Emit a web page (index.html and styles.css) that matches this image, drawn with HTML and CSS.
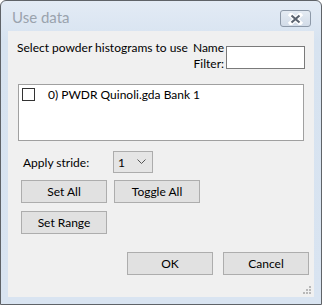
FILE: index.html
```html
<html>

<head>
    <meta charset="utf-8">
    <title>Use data</title>
    <link rel="stylesheet" href="styles.css">
</head>

<body>
    <div class="window">
        <div class="titleBar">
            <div class="titleText">Use data</div>
            <div class="closeBtn">
                <svg width="17" height="12" viewBox="0 0 17 12">
                    <path d="M4 2 L13 10 M13 2 L4 10" stroke="#ffffff" stroke-width="4.5" stroke-linecap="square" fill="none"/>
                    <path d="M4.5 2.5 L12.5 9.5 M12.5 2.5 L4.5 9.5" stroke="#5b6470" stroke-width="2.2" fill="none"/>
                </svg>
            </div>
        </div>

        <div class="client">
            <div class="headRow">
                <div class="headText">Select powder histograms to use</div>
                <div class="filterLabel">Name<br/>Filter:</div>
                <input type="text" class="filterBox">
            </div>

            <div class="listBox">
                <div class="listRow">
                    <span class="checkBox"></span>
                    <span class="listText">0) PWDR Quinoli.gda Bank 1</span>
                </div>
            </div>

            <div class="strideRow">
                <div class="strideLabel">Apply stride:</div>
                <div class="combo">
                    <span>1</span>
                    <svg width="9" height="6" viewBox="0 0 9 6">
                        <path d="M0.5 0.5 L4.5 4.5 L8.5 0.5" stroke="#555555" stroke-width="1" fill="none"/>
                    </svg>
                </div>
            </div>

            <div class="btnRow">
                <div class="btn">Set All</div>
                <div class="btn">Toggle All</div>
            </div>
            <div class="btnRow rangeRow">
                <div class="btn">Set Range</div>
            </div>

            <div class="okRow">
                <div class="btn">OK</div>
                <div class="btn">Cancel</div>
            </div>

            <svg class="grip" width="9" height="9" viewBox="0 0 9 9">
                <rect x="6" y="0" width="2" height="2" fill="#b8b8b8"/>
                <rect x="3" y="3" width="2" height="2" fill="#b8b8b8"/>
                <rect x="6" y="3" width="2" height="2" fill="#b8b8b8"/>
                <rect x="0" y="6" width="2" height="2" fill="#b8b8b8"/>
                <rect x="3" y="6" width="2" height="2" fill="#b8b8b8"/>
                <rect x="6" y="6" width="2" height="2" fill="#b8b8b8"/>
            </svg>
        </div>
    </div>
</body>

</html>
```

FILE: styles.css
```css
html {
    padding: 0;
    margin: 0;
}

body {
    margin: 0;
    background-color: #ffffff;
    font-family: Lato, "Noto Sans", sans-serif;
    font-size: 12px;
    color: #000000;
}

.window {
    width: 320px;
    height: 303px;
    border: 1px solid #5f6368;
    border-radius: 6px 6px 0 0;
    background: linear-gradient(#e3ebf5, #d7e3f0 40px, #d9e4f1);
    display: flex;
    flex-direction: column;
}

.titleBar {
    height: 30px;
    display: flex;
    align-items: flex-start;
}

.titleText {
    margin-left: 11px;
    margin-top: 7px;
    font-size: 15px;
    color: #9aa3ad;
}

.closeBtn {
    margin-left: auto;
    margin-right: 10px;
    margin-top: 9px;
    width: 29px;
    height: 15px;
    border: 1px solid #8d99a8;
    border-radius: 3px;
    background: linear-gradient(#e4ebf3, #d2dce8);
    display: flex;
    align-items: center;
    justify-content: center;
}

.client {
    margin: 0 7px;
    height: 266px;
    background-color: #f0f0f0;
    position: relative;
}

.headRow {
    display: flex;
    padding-top: 9px;
    padding-left: 9px;
    height: 32px;
    white-space: nowrap;
}

.headText {
    line-height: 16px;
}

.filterLabel {
    margin-left: 5px;
    line-height: 16px;
    text-align: right;
}

.filterBox {
    margin-left: 2px;
    margin-top: 6px;
    width: 79px;
    height: 23px;
    box-sizing: border-box;
    border: 1px solid #7a7a7a;
    background-color: #ffffff;
    padding: 0;
}

.listBox {
    margin: 12px 0 0 10px;
    width: 286px;
    height: 57px;
    box-sizing: border-box;
    border: 1px solid #a0a0a0;
    background-color: #ffffff;
}

.listRow {
    display: flex;
    align-items: center;
    padding: 3px 0 0 3px;
    height: 13px;
}

.checkBox {
    width: 13px;
    height: 13px;
    box-sizing: border-box;
    border: 1px solid #333333;
    background-color: #ffffff;
}

.listText {
    margin-left: 13px;
    line-height: 16px;
}

.strideRow {
    display: flex;
    align-items: center;
    margin-top: 10px;
    padding-left: 15px;
    height: 22px;
}

.strideLabel {
    width: 90px;
}

.combo {
    width: 40px;
    height: 22px;
    box-sizing: border-box;
    border: 1px solid #acacac;
    background-color: #e5e5e5;
    display: flex;
    align-items: center;
    justify-content: space-between;
    padding: 0 6px 0 4px;
}

.btnRow {
    display: flex;
    gap: 7px;
    margin-top: 7px;
    padding-left: 13px;
}

.rangeRow {
    margin-top: 8px;
}

.btn {
    width: 86px;
    height: 23px;
    box-sizing: border-box;
    border: 1px solid #adadad;
    background-color: #e1e1e1;
    display: flex;
    align-items: center;
    justify-content: center;
}

.okRow {
    display: flex;
    gap: 10px;
    justify-content: flex-end;
    margin-top: 18px;
    padding-right: 5px;
}

.grip {
    position: absolute;
    right: 2px;
    bottom: 2px;
}
```
